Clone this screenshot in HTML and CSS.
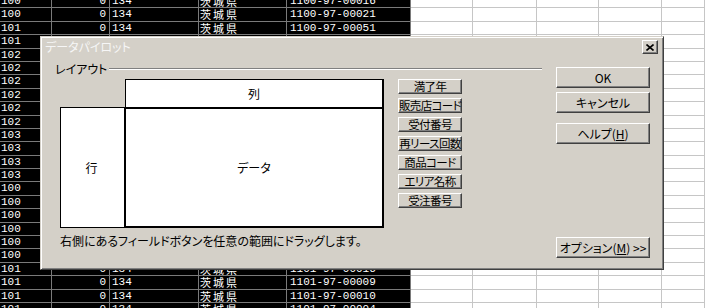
FILE: index.html
```html
<!DOCTYPE html>
<html>
    <head>
        <meta charset="utf-8">
        <title>データパイロット</title>
        <link rel="stylesheet" href="styles.css">
    </head>
    <body>
        <div class="sheet">
            <div class="row"><span>100</span><span>0</span><span>134</span><span>茨城県</span><span>1100-97-00016</span><span></span><span></span><span></span><span></span><span></span></div>
            <div class="row"><span>100</span><span>0</span><span>134</span><span>茨城県</span><span>1100-97-00021</span><span></span><span></span><span></span><span></span><span></span></div>
            <div class="row"><span>101</span><span>0</span><span>134</span><span>茨城県</span><span>1100-97-00051</span><span></span><span></span><span></span><span></span><span></span></div>
            <div class="row"><span>101</span><span></span><span></span><span></span><span></span><span></span><span></span><span></span><span></span><span></span></div>
            <div class="row"><span>102</span><span></span><span></span><span></span><span></span><span></span><span></span><span></span><span></span><span></span></div>
            <div class="row"><span>102</span><span></span><span></span><span></span><span></span><span></span><span></span><span></span><span></span><span></span></div>
            <div class="row"><span>102</span><span></span><span></span><span></span><span></span><span></span><span></span><span></span><span></span><span></span></div>
            <div class="row"><span>102</span><span></span><span></span><span></span><span></span><span></span><span></span><span></span><span></span><span></span></div>
            <div class="row"><span>102</span><span></span><span></span><span></span><span></span><span></span><span></span><span></span><span></span><span></span></div>
            <div class="row"><span>102</span><span></span><span></span><span></span><span></span><span></span><span></span><span></span><span></span><span></span></div>
            <div class="row"><span>103</span><span></span><span></span><span></span><span></span><span></span><span></span><span></span><span></span><span></span></div>
            <div class="row"><span>103</span><span></span><span></span><span></span><span></span><span></span><span></span><span></span><span></span><span></span></div>
            <div class="row"><span>103</span><span></span><span></span><span></span><span></span><span></span><span></span><span></span><span></span><span></span></div>
            <div class="row"><span>103</span><span></span><span></span><span></span><span></span><span></span><span></span><span></span><span></span><span></span></div>
            <div class="row"><span>100</span><span></span><span></span><span></span><span></span><span></span><span></span><span></span><span></span><span></span></div>
            <div class="row"><span>100</span><span></span><span></span><span></span><span></span><span></span><span></span><span></span><span></span><span></span></div>
            <div class="row"><span>100</span><span></span><span></span><span></span><span></span><span></span><span></span><span></span><span></span><span></span></div>
            <div class="row"><span>100</span><span></span><span></span><span></span><span></span><span></span><span></span><span></span><span></span><span></span></div>
            <div class="row"><span>100</span><span></span><span></span><span></span><span></span><span></span><span></span><span></span><span></span><span></span></div>
            <div class="row"><span>100</span><span></span><span></span><span></span><span></span><span></span><span></span><span></span><span></span><span></span></div>
            <div class="row"><span>101</span><span>0</span><span>134</span><span>茨城県</span><span>1101-97-00016</span><span></span><span></span><span></span><span></span><span></span></div>
            <div class="row"><span>101</span><span>0</span><span>134</span><span>茨城県</span><span>1101-97-00009</span><span></span><span></span><span></span><span></span><span></span></div>
            <div class="row"><span>101</span><span>0</span><span>134</span><span>茨城県</span><span>1101-97-00010</span><span></span><span></span><span></span><span></span><span></span></div>
            <div class="row"><span>101</span><span>0</span><span>134</span><span>茨城県</span><span>1101-97-00004</span><span></span><span></span><span></span><span></span><span></span></div>
        </div>

        <!-- データパイロット ダイアログ -->
        <div class="dialog">
            <div class="titlebar">
                <span>データパイロット</span>
                <div class="close">
                    <svg width="8" height="7" viewBox="0 0 8 7">
                        <path d="M0.5 0.5 L7.5 6.5 M7.5 0.5 L0.5 6.5" stroke="#000" stroke-width="1.6" fill="none"/>
                    </svg>
                </div>
            </div>
            <div class="dlg_body">
                <div class="dlg_left">
                    <div class="group_head">
                        <span>レイアウト</span>
                        <div class="etch"></div>
                    </div>
                    <div class="layout_area">
                        <div class="diagram">
                            <div class="drop_col">列</div>
                            <div class="drop_row">行</div>
                            <div class="drop_data">データ</div>
                        </div>
                        <div class="fields">
                            <button class="btn field">満了年</button>
                            <button class="btn field">販売店コード</button>
                            <button class="btn field">受付番号</button>
                            <button class="btn field">再リース回数</button>
                            <button class="btn field">商品コード</button>
                            <button class="btn field">エリア名称</button>
                            <button class="btn field">受注番号</button>
                        </div>
                    </div>
                    <div class="hint">右側にあるフィールドボタンを任意の範囲にドラッグします。</div>
                </div>
                <div class="actions">
                    <button class="btn action">OK</button>
                    <button class="btn action">キャンセル</button>
                    <button class="btn action help">ヘルプ(<u>H</u>)</button>
                    <button class="btn action option">オプション(<u>M</u>) &gt;&gt;</button>
                </div>
            </div>
        </div>
    </body>
</html>
```

FILE: styles.css
```css
* {
    box-sizing: border-box;
}

body {
    margin: 0;
    width: 705px;
    height: 308px;
    overflow: hidden;
    position: relative;
    background: #fff;
    font-family: "Noto Sans CJK JP", sans-serif;
}

/* 背景のスプレッドシート */
.sheet {
    margin-top: -5px;
}

.row {
    display: flex;
    height: 13.4px;
}

.row span {
    height: 100%;
    border-right: 1px solid #c6c6c6;
    border-bottom: 1px solid #c6c6c6;
    overflow: hidden;
    white-space: nowrap;
    font-family: "Liberation Mono", monospace;
    font-size: 11px;
    line-height: 13px;
}

.row span:nth-child(-n+5) {
    background: #000;
    color: #fff;
    border-color: #7a7a7a;
}

.row span:nth-child(1) { width: 52px; padding-left: 1px; }
.row span:nth-child(2) { width: 58px; padding-right: 3px; text-align: right; }
.row span:nth-child(3) { width: 89px; padding-left: 2px; }
.row span:nth-child(4) {
    width: 88px;
    padding-left: 1px;
    font-family: "Noto Sans CJK JP", sans-serif;
    font-size: 11px;
    line-height: 12px;
    letter-spacing: 2px;
}
.row span:nth-child(5) { width: 124px; padding-left: 3px; }
.row span:nth-child(6) { width: 62px; }
.row span:nth-child(7) { width: 64px; }
.row span:nth-child(8) { width: 62px; }
.row span:nth-child(9) { width: 63px; }
.row span:nth-child(10) { flex: 1; }

/* ダイアログ */
.dialog {
    position: absolute;
    left: 40px;
    top: 36px;
    width: 624px;
    height: 234px;
    padding: 1px;
    background: #d4d0c8;
    border: 1px solid;
    border-color: #d4d0c8 #404040 #404040 #d4d0c8;
    box-shadow: inset 1px 1px #fff, inset -1px -1px #808080;
    display: flex;
    flex-direction: column;
    font-size: 12px;
    font-feature-settings: "palt";
    color: #000;
}

.titlebar {
    height: 18px;
    display: flex;
    align-items: center;
    justify-content: space-between;
    padding: 0 4px 0 3px;
    color: #f6f6f6;
    line-height: 14px;
}

.close {
    width: 16px;
    height: 14px;
    border: 1px solid;
    border-color: #fff #404040 #404040 #fff;
    box-shadow: inset -1px -1px #808080;
    display: flex;
    align-items: center;
    justify-content: center;
}

.dlg_body {
    flex: 1;
    display: flex;
    gap: 14px;
    padding: 6px 12px 10px 13px;
}

.dlg_left {
    width: 487px;
    display: flex;
    flex-direction: column;
}

.group_head {
    display: flex;
    align-items: center;
    height: 14px;
    line-height: 14px;
}

.etch {
    flex: 1;
    margin-left: 2px;
    border-top: 1px solid #808080;
    border-bottom: 1px solid #fff;
}

.layout_area {
    display: flex;
    gap: 14px;
    margin-top: 3px;
    padding-left: 5px;
}

.diagram {
    display: grid;
    grid-template-columns: 64px 260px;
    grid-template-rows: 28px 121px;
}

.diagram div {
    background: #fff;
    display: flex;
    align-items: center;
    justify-content: center;
}

.drop_col {
    grid-column: 2;
    grid-row: 1;
    margin-left: 1px;
    border: 1px solid #000;
    border-right-width: 2px;
    border-bottom: 0;
}

.drop_row {
    grid-column: 1;
    grid-row: 2;
    border: 1px solid #000;
    border-right: 0;
    padding-right: 2px;
}

.drop_data {
    grid-column: 2;
    grid-row: 2;
    border: 2px solid #000;
}

.fields {
    width: 64px;
    display: flex;
    flex-direction: column;
    gap: 4px;
}

.btn {
    padding: 0;
    margin: 0;
    background: #d4d0c8;
    border: 1px solid;
    border-color: #fff #404040 #404040 #fff;
    box-shadow: inset -1px -1px #808080;
    font-family: inherit;
    font-size: 12px;
    font-feature-settings: "palt";
    color: #000;
    display: flex;
    align-items: center;
    justify-content: center;
    white-space: nowrap;
}

.field {
    height: 15px;
    line-height: 13px;
    font-size: 11.5px;
    letter-spacing: -0.6px;
}

.hint {
    margin-top: 6px;
    padding-left: 5px;
    line-height: 14px;
}

.actions {
    width: 94px;
    display: flex;
    flex-direction: column;
    padding-top: 5px;
}

.action {
    height: 21px;
    margin-bottom: 4px;
}

.help {
    margin-top: 6px;
}

.option {
    margin-top: auto;
    margin-bottom: 0;
}
```
